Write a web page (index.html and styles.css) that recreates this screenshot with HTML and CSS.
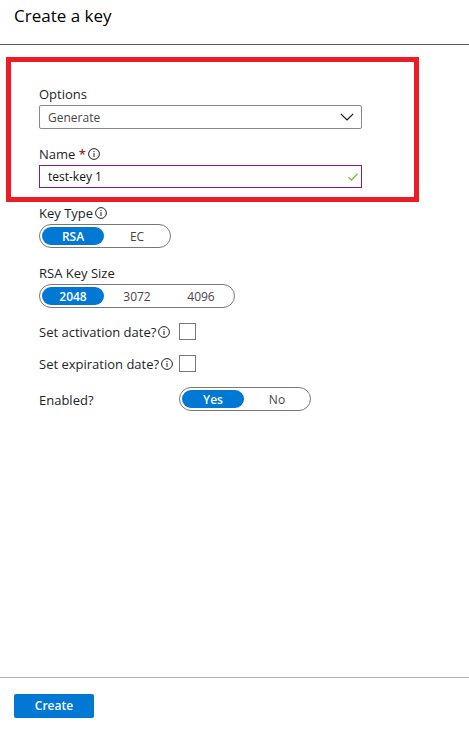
FILE: index.html
```html
<!DOCTYPE html>
<html lang="en">
<head>
<meta charset="utf-8">
<meta name="viewport" content="width=device-width, initial-scale=1">
<title>Create a key</title>
<link rel="stylesheet" href="styles.css">
</head>
<body>
<svg class="sprite" aria-hidden="true">
  <symbol id="info" viewBox="0 0 12 12">
    <circle cx="6" cy="6" r="5.4" fill="none" stroke="currentColor" stroke-width="1"/>
    <path d="M6 5v4" stroke="currentColor" stroke-width="1"/>
    <path d="M6 3v1.1" stroke="currentColor" stroke-width="1"/>
  </symbol>
</svg>
<header class="header"><h1 class="title">Create a key</h1></header>
<form class="form">
  <section class="highlight">
    <div class="field">
      <label class="label" for="options">Options</label>
      <div class="control">
        <select class="box" id="options"><option>Generate</option></select>
        <svg class="chevron" viewBox="0 0 14 8" aria-hidden="true"><path d="M.8.8 7 7 13.2.8" fill="none" stroke="currentColor" stroke-width="1.2"/></svg>
      </div>
    </div>
    <div class="field">
      <label class="label" for="name">Name <span class="required">*</span><svg class="info"><use href="#info"/></svg></label>
      <div class="control">
        <input class="box box-active" id="name" type="text" value="test-key 1">
        <svg class="check" viewBox="0 0 10 8" aria-hidden="true"><path d="M.5 4.2 3.4 7 9.5.8" fill="none" stroke="currentColor" stroke-width="1.3"/></svg>
      </div>
    </div>
  </section>
  <div class="settings">
    <div class="field" role="radiogroup" aria-labelledby="type-label">
      <span class="label" id="type-label">Key Type<svg class="info"><use href="#info"/></svg></span>
      <div class="pill">
        <label class="segment"><input type="radio" name="type" checked><span>RSA</span></label>
        <label class="segment"><input type="radio" name="type"><span>EC</span></label>
      </div>
    </div>
    <div class="field" role="radiogroup" aria-labelledby="size-label">
      <span class="label" id="size-label">RSA Key Size</span>
      <div class="pill">
        <label class="segment"><input type="radio" name="size" checked><span>2048</span></label>
        <label class="segment"><input type="radio" name="size"><span>3072</span></label>
        <label class="segment"><input type="radio" name="size"><span>4096</span></label>
      </div>
    </div>
    <div class="row">
      <label class="label" for="activation">Set activation date?<svg class="info"><use href="#info"/></svg></label>
      <input class="checkbox" id="activation" type="checkbox">
    </div>
    <div class="row">
      <label class="label" for="expiration">Set expiration date?<svg class="info"><use href="#info"/></svg></label>
      <input class="checkbox" id="expiration" type="checkbox">
    </div>
    <div class="row" role="radiogroup" aria-labelledby="enabled-label">
      <span class="label" id="enabled-label">Enabled?</span>
      <div class="pill">
        <label class="segment"><input type="radio" name="enabled" checked><span>Yes</span></label>
        <label class="segment"><input type="radio" name="enabled"><span>No</span></label>
      </div>
    </div>
  </div>
  <footer class="footer"><button class="create" type="button">Create</button></footer>
</form>
</body>
</html>
```
FILE: styles.css
```css
* { box-sizing: border-box; }

body {
  margin: 0;
  min-height: 100vh;
  display: flex;
  flex-direction: column;
  background: #fff;
  color: #484644;
  font: 12px/16px "Open Sans", "Noto Sans", sans-serif;
}

.sprite { position: absolute; width: 0; height: 0; }

.header {
  padding: 4px 14px 16px;
  border-bottom: 1px solid #605e5c;
}

.title {
  margin: 0;
  color: #000;
  font-size: 17px;
  font-weight: 400;
  line-height: 24px;
}

.form {
  flex: 1;
  display: flex;
  flex-direction: column;
}

.highlight {
  display: grid;
  gap: 16px;
  margin: 12px 50px 0 6px;
  padding: 23px 52px 9px 28px;
  border: 5px solid #ed1c24;
}

.field {
  display: grid;
  gap: 3px;
  justify-items: start;
}

.label {
  display: flex;
  align-items: center;
  padding-top: 1px;
  color: #201f1e;
  font-size: 13px;
  font-weight: 400;
  line-height: 16px;
  white-space: pre;
}

.required { color: #a4262c; font-weight: 600; }

.info {
  width: 12px;
  height: 12px;
  margin-left: 2px;
  color: #222;
}

.control { position: relative; width: 100%; }

.box {
  display: block;
  width: 100%;
  height: 24px;
  padding: 2px 28px 0 8px;
  border: 1px solid #8a8886;
  border-radius: 2px;
  background: #fff;
  color: #484644;
  font: inherit;
  appearance: none;
  outline: 0;
}

.box-active {
  height: 23px;
  padding-top: 0;
  border-color: #881798;
  border-radius: 0;
  color: #111;
}

.chevron, .check {
  position: absolute;
  top: 8px;
  pointer-events: none;
}

.chevron { right: 8px; width: 14px; height: 8px; color: #111; }
.check { right: 4px; width: 10px; height: 8px; color: #7db83a; }

.settings {
  display: grid;
  gap: 15px;
  margin-bottom: 16px;
  padding: 2px 39px 0;
}

.settings .field + .field { margin-top: 1px; }

.pill {
  display: inline-flex;
  gap: 2px;
  padding: 2px;
  border: 1px solid #7a7876;
  border-radius: 12px;
}

.segment { position: relative; }

.segment input {
  position: absolute;
  inset: 0;
  margin: 0;
  opacity: 0;
}

.segment span {
  display: block;
  width: 62px;
  padding-top: 2px;
  border-radius: 9px;
  line-height: 16px;
  text-align: center;
}

.segment input:checked + span {
  background: #0078d4;
  color: #fff;
  font-weight: 600;
}

.row {
  display: grid;
  grid-template-columns: 140px 1fr;
  align-items: center;
  justify-items: start;
}

.checkbox {
  width: 17px;
  height: 17px;
  margin: 0;
  border: 1px solid #7a7876;
  background: #fff;
  appearance: none;
}

.checkbox:checked { background: #0078d4; }

.footer {
  margin-top: auto;
  padding: 16px 14px 11px;
  border-top: 1px solid #b3b0ad;
}

.create {
  display: block;
  width: 80px;
  height: 24px;
  padding: 0;
  border: 0;
  border-radius: 2px;
  background: #0078d4;
  color: #fff;
  font: inherit;
  font-weight: 600;
}
```
